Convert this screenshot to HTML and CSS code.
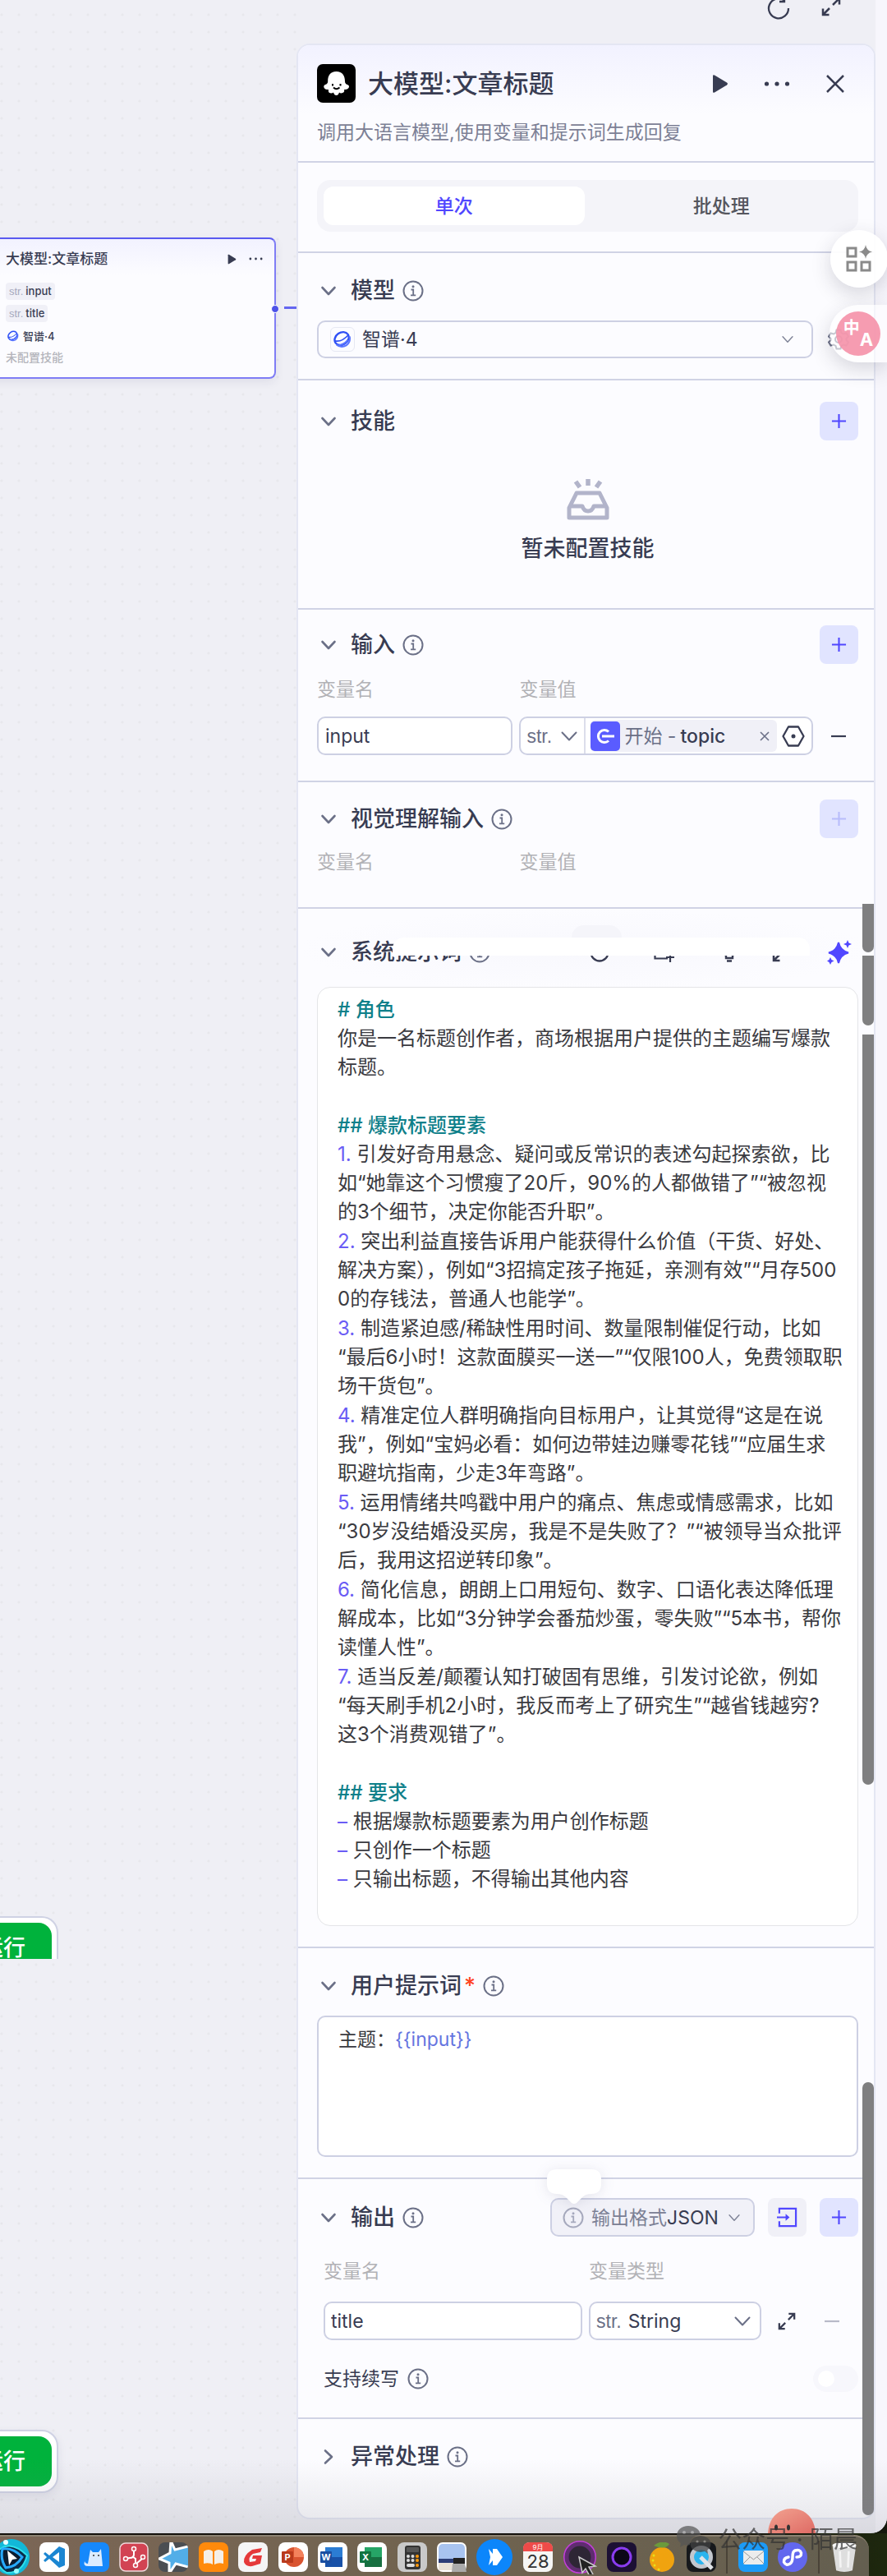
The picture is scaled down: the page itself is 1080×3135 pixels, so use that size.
FILE: index.html
```html
<!DOCTYPE html>
<html lang="zh-CN">
<head>
  <meta charset="UTF-8">
  <meta name="viewport" content="width=device-width, initial-scale=1.0">
  <title>大模型:文章标题</title>
  <link rel="stylesheet" href="styles.css">
</head>
<body>

  <!-- 共用图标 -->
  <svg class="defs" aria-hidden="true">
    <symbol id="i-info" viewBox="0 0 26 26"><circle cx="13" cy="13" r="11.5" fill="none" stroke="currentColor" stroke-width="2"/><path d="M10.5 11.5H13.2V18M10 18.3H16.2" fill="none" stroke="currentColor" stroke-width="1.8"/><circle cx="13" cy="7.8" r="1.5" fill="currentColor"/></symbol>
    <symbol id="i-down" viewBox="0 0 20 20"><path d="M2.5 6L10 14L17.5 6" fill="none" stroke="currentColor" stroke-width="2.6" stroke-linecap="round" stroke-linejoin="round"/></symbol>
    <symbol id="i-thin" viewBox="0 0 20 20"><path d="M1.5 5.5L10 14.5L18.5 5.5" fill="none" stroke="currentColor" stroke-width="2" stroke-linecap="round" stroke-linejoin="round"/></symbol>
    <symbol id="i-plus" viewBox="0 0 20 20"><path d="M1 10H19M10 1V19" fill="none" stroke="currentColor" stroke-width="2.2"/></symbol>
    <symbol id="i-minus" viewBox="0 0 20 20"><path d="M1 10H19" fill="none" stroke="currentColor" stroke-width="2.2"/></symbol>
    <symbol id="i-play" viewBox="0 0 20 24"><path d="M1 2.5Q1 .5 3 1.6L18 10.6Q20 12 18 13.4L3 22.4Q1 23.5 1 21.5Z" fill="currentColor"/></symbol>
    <symbol id="i-dots" viewBox="0 0 32 10"><circle cx="3.5" cy="5" r="2.6" fill="currentColor"/><circle cx="16" cy="5" r="2.6" fill="currentColor"/><circle cx="28.500" cy="5" r="2.6" fill="currentColor"/></symbol>
    <symbol id="i-expand" viewBox="0 0 24 24"><path d="M14 10L21.500 2.500M14.500 2H22V9.500M10 14L2.500 21.500M2 14.500V22H9.500" fill="none" stroke="currentColor" stroke-width="2.500"/></symbol>
    <symbol id="i-zhipu" viewBox="0 0 24 24"><ellipse cx="11" cy="11" rx="10" ry="8" transform="rotate(-35 11 11)" fill="none" stroke="#2f50f5" stroke-width="2.600"/><path d="M2 14Q11 16 20 6" fill="none" stroke="#2f50f5" stroke-width="1.800"/><path d="M4 19Q10 24 17 20Q23 16 21.500 8M7 20Q14 19 19 13" fill="none" stroke="#5a76ff" stroke-width="2.200"/></symbol>
  </svg>

  <main class="workspace">

    <!-- 左侧画布 -->
    <div class="canvas">
      <article class="node">
        <header class="node-head">
          <h3>大模型:文章标题</h3>
          <svg class="node-play"><use href="#i-play"/></svg>
          <svg class="node-dots"><use href="#i-dots"/></svg>
        </header>
        <span class="chip"><span>str.</span>input</span>
        <span class="chip"><span>str.</span>title</span>
        <p class="node-model"><svg><use href="#i-zhipu"/></svg>智谱·4</p>
        <p class="node-empty">未配置技能</p>
        <i class="port"></i>
      </article>
      <i class="edge"></i>
      <div class="run run-cut"><button type="button">试运行</button></div>
      <div class="run run-full"><button type="button">试运行</button></div>
    </div>

    <div class="side">
      <div class="topbar">
        <button class="icon-btn" type="button" aria-label="刷新"><svg width="28" height="28" viewBox="0 0 28 28"><path d="M21 4.500A12 12 0 1 0 26 14M21 0V6H15" fill="none" stroke="currentColor" stroke-width="2.300"/></svg></button>
        <button class="icon-btn" type="button" aria-label="全屏"><svg width="24" height="24"><use href="#i-expand"/></svg></button>
      </div>

      <section class="panel">
        <header class="panel-head">
          <div class="title-row">
            <svg class="logo" viewBox="0 0 47 47"><rect width="47" height="47" rx="7" fill="#000"/><path d="M23.500 9C16 9 13 14 13.200 21Q13.200 24 10 25Q7 26.500 9 29.500Q11 31.500 14 31Q13 35 17 35.500Q19 35.500 20 34.500Q21 38 23.500 38Q26 38 27 34.500Q29 36 31 35Q34 34 33 31Q37 31.500 38.500 29Q40 26 37 25Q34 24 34 21C34 14 31 9 23.500 9Z" fill="#fff"/><path d="M19 24V26.500M28.500 24V26.500" stroke="#000" stroke-width="2"/><path d="M20 28.500Q23.500 32 27.500 28.500" fill="none" stroke="#000" stroke-width="1.800"/></svg>
            <h1>大模型:文章标题</h1>
            <div class="title-actions">
              <button class="icon-btn" type="button" aria-label="运行"><svg width="20" height="24"><use href="#i-play"/></svg></button>
              <button class="icon-btn" type="button" aria-label="更多"><svg width="32" height="10"><use href="#i-dots"/></svg></button>
              <button class="icon-btn" type="button" aria-label="关闭"><svg width="24" height="24" viewBox="0 0 24 24"><path d="M2 2L22 22M22 2L2 22" stroke="currentColor" stroke-width="2.500"/></svg></button>
            </div>
          </div>
          <p class="subtitle">调用大语言模型,使用变量和提示词生成回复</p>
        </header>

        <div class="section tabs-section">
          <div class="tabs" role="tablist">
            <button class="active" type="button" role="tab">单次</button>
            <button type="button" role="tab">批处理</button>
          </div>
        </div>

        <div class="section model">
          <div class="head">
            <svg class="arrow"><use href="#i-down"/></svg>
            <h2>模型</h2>
            <svg class="info"><use href="#i-info"/></svg>
          </div>
          <div class="model-row">
            <label class="field">
              <span class="zhipu"><svg><use href="#i-zhipu"/></svg></span>
              <select aria-label="模型"><option>智谱·4</option></select>
              <svg class="caret-s"><use href="#i-thin"/></svg>
            </label>
            <button class="icon-btn" type="button" aria-label="模型设置"><svg class="gear" width="26" height="26" viewBox="0 0 26 26" fill="none" stroke="currentColor" stroke-width="2"><path d="M10.500 1.500H15.500L16.500 5L19 6.500L22.500 5.500L25 9.500L22.500 12V14L25 16.500L22.500 20.500L19 19.500L16.500 21L15.500 24.500H10.500L9.500 21L7 19.500L3.500 20.500L1 16.500L3.500 14V12L1 9.500L3.500 5.500L7 6.500L9.500 5Z"/><circle cx="13" cy="13" r="4"/></svg></button>
          </div>
        </div>

        <div class="section skills">
          <div class="head">
            <svg class="arrow"><use href="#i-down"/></svg>
            <h2>技能</h2>
            <button class="add" type="button" aria-label="添加技能"><svg><use href="#i-plus"/></svg></button>
          </div>
          <div class="empty">
            <svg width="54" height="50" viewBox="0 0 54 50" fill="none" stroke="#b2b4ca" stroke-width="5" stroke-linejoin="round"><path d="M13 17H41L50 35V47H4V35ZM4 33H20Q22 39 27 39Q32 39 34 33H50"/><path d="M27 0V8M12 3L17 10M42 3L37 10" stroke-width="5.500"/></svg>
            <p>暂未配置技能</p>
          </div>
        </div>

        <div class="section inputs">
          <div class="head">
            <svg class="arrow"><use href="#i-down"/></svg>
            <h2>输入</h2>
            <svg class="info"><use href="#i-info"/></svg>
            <button class="add" type="button" aria-label="添加输入"><svg><use href="#i-plus"/></svg></button>
          </div>
          <div class="input-grid labels"><span>变量名</span><span>变量值</span></div>
          <div class="input-grid">
            <input class="field" type="text" value="input" aria-label="变量名">
            <div class="field value">
              <label class="type">
                <select class="str" aria-label="类型"><option>str.</option></select>
                <svg class="caret"><use href="#i-thin"/></svg>
              </label>
              <span class="ref">
                <svg width="36" height="36" viewBox="0 0 36 36"><rect width="36" height="36" rx="5" fill="#5a5cff"/><path d="M22 12.500A7.500 7.500 0 1 0 22 23.500M14 18H29" fill="none" stroke="#fff" stroke-width="3"/></svg>
                开始 - <b>topic</b>
                <button class="icon-btn" type="button" aria-label="清除"><svg width="12" height="12" viewBox="0 0 12 12"><path d="M1 1L11 11M11 1L1 11" stroke="#6b7087" stroke-width="1.600"/></svg></button>
              </span>
              <button class="icon-btn" type="button" aria-label="选择变量"><svg width="28" height="28" viewBox="0 0 28 28"><path d="M8 2.500H20L26.500 14L20 25.500H8L1.500 14Z" fill="none" stroke="currentColor" stroke-width="2.300" stroke-linejoin="round"/><circle cx="14" cy="14" r="2.500" fill="currentColor"/></svg></button>
            </div>
            <button class="icon-btn cell" type="button" aria-label="删除"><svg width="20" height="20"><use href="#i-minus"/></svg></button>
          </div>
        </div>

        <div class="section vision">
          <div class="head">
            <svg class="arrow"><use href="#i-down"/></svg>
            <h2>视觉理解输入</h2>
            <svg class="info"><use href="#i-info"/></svg>
            <button class="add" type="button" disabled aria-label="添加视觉输入"><svg><use href="#i-plus"/></svg></button>
          </div>
          <div class="input-grid labels"><span>变量名</span><span>变量值</span></div>
        </div>

        <div class="section system">
          <div class="head">
            <svg class="arrow"><use href="#i-down"/></svg>
            <h2>系统提示词</h2>
            <svg class="info"><use href="#i-info"/></svg>
            <div class="tools">
              <button class="icon-btn" type="button" aria-label="历史"><svg width="24" height="24" viewBox="0 0 24 24"><circle cx="12" cy="12" r="10.500" fill="none" stroke="currentColor" stroke-width="2.300"/></svg></button>
              <button class="icon-btn" type="button" aria-label="插入"><svg width="26" height="24" viewBox="0 0 26 24" fill="none" stroke="currentColor" stroke-width="2.200"><path d="M1.500 3V19.500H17M20 14V24M15 18H25"/></svg></button>
              <button class="icon-btn" type="button" aria-label="建议"><svg width="24" height="24" viewBox="0 0 24 24" fill="none" stroke="currentColor" stroke-width="2.400"><path d="M8 16Q4 13 4 9A8 8 0 0 1 20 9Q20 13 16 16V19H8ZM9 22.500H15"/></svg></button>
              <button class="icon-btn expand" type="button" aria-label="展开"><svg width="24" height="24"><use href="#i-expand"/></svg></button>
            </div>
            <button class="icon-btn cell magic" type="button" aria-label="优化"><svg width="30" height="30" viewBox="0 0 30 30" fill="currentColor"><path d="M14 3Q16 13 26 15.500Q16 18 14 28Q12 18 2 15.500Q12 13 14 3Z" stroke="currentColor" stroke-width="2"/><path d="M25 0L26.500 3.500L30 5L26.500 6.500L25 10L23.500 6.500L20 5L23.500 3.500ZM4 21L5.500 24L8.500 25.500L5.500 27L4 30L2.500 27L0 25.500L2.500 24Z"/></svg></button>
            <div class="popover"></div>
          </div>
          <div class="prompt system-prompt" contenteditable="true" role="textbox" aria-multiline="true" aria-label="系统提示词">
            <h4># 角色</h4>
            <p>你是一名标题创作者，商场根据用户提供的主题编写爆款<br>标题。</p>
            <h4 class="gap">## 爆款标题要素</h4>
            <p><em>1.</em> 引发好奇用悬念、疑问或反常识的表述勾起探索欲，比<br>如“她靠这个习惯瘦了20斤，90%的人都做错了”“被忽视<br>的3个细节，决定你能否升职”。</p>
            <p><em>2.</em> 突出利益直接告诉用户能获得什么价值（干货、好处、<br>解决方案），例如“3招搞定孩子拖延，亲测有效”“月存500<br>0的存钱法，普通人也能学”。</p>
            <p><em>3.</em> 制造紧迫感/稀缺性用时间、数量限制催促行动，比如<br>“最后6小时！这款面膜买一送一”“仅限100人，免费领取职<br>场干货包”。</p>
            <p><em>4.</em> 精准定位人群明确指向目标用户，让其觉得“这是在说<br>我”，例如“宝妈必看：如何边带娃边赚零花钱”“应届生求<br>职避坑指南，少走3年弯路”。</p>
            <p><em>5.</em> 运用情绪共鸣戳中用户的痛点、焦虑或情感需求，比如<br>“30岁没结婚没买房，我是不是失败了？”“被领导当众批评<br>后，我用这招逆转印象”。</p>
            <p><em>6.</em> 简化信息，朗朗上口用短句、数字、口语化表达降低理<br>解成本，比如“3分钟学会番茄炒蛋，零失败”“5本书，帮你<br>读懂人性”。</p>
            <p><em>7.</em> 适当反差/颠覆认知打破固有思维，引发讨论欲，例如<br>“每天刷手机2小时，我反而考上了研究生”“越省钱越穷?<br>这3个消费观错了”。</p>
            <h4 class="gap">## 要求</h4>
            <p><em>–</em> 根据爆款标题要素为用户创作标题<br><em>–</em> 只创作一个标题<br><em>–</em> 只输出标题，不得输出其他内容</p>
          </div>
        </div>

        <div class="section user">
          <div class="head">
            <svg class="arrow"><use href="#i-down"/></svg>
            <h2>用户提示词<span class="must">*</span></h2>
            <svg class="info"><use href="#i-info"/></svg>
          </div>
          <div class="prompt user-prompt" contenteditable="true" role="textbox" aria-multiline="true" aria-label="用户提示词"><p>主题：<span class="var">{{input}}</span></p></div>
        </div>

        <div class="section output">
          <div class="head">
            <svg class="arrow"><use href="#i-down"/></svg>
            <h2>输出</h2>
            <svg class="info"><use href="#i-info"/></svg>
            <label class="field format">
              <svg class="info"><use href="#i-info"/></svg>
              <span>输出格式</span>
              <select aria-label="输出格式"><option>JSON</option></select>
              <svg class="caret-s"><use href="#i-thin"/></svg>
              <svg class="bubble" viewBox="0 0 66 42"><path d="M12 0H54Q66 0 66 12V18Q66 30 54 30Q47 30 43 34L36 41Q33 43 30 41L23 34Q19 30 12 30Q0 30 0 18V12Q0 0 12 0Z" fill="#fff"/></svg>
            </label>
            <button class="add import" type="button" aria-label="导入"><svg viewBox="0 0 26 26" fill="none" stroke="currentColor" stroke-width="2.300"><path d="M3 8V2H24V24H3V18M0 13H14"/><path d="M11 8.500L16 13L11 17.500Z" fill="currentColor" stroke="none"/></svg></button>
            <button class="add" type="button" aria-label="添加输出"><svg><use href="#i-plus"/></svg></button>
          </div>
          <div class="output-body">
            <div class="output-grid labels"><span>变量名</span><span>变量类型</span></div>
            <div class="output-grid">
              <input class="field" type="text" value="title" aria-label="变量名">
              <label class="field">
                <span class="str">str.</span>
                <select aria-label="变量类型"><option>String</option></select>
                <svg class="caret"><use href="#i-thin"/></svg>
              </label>
              <button class="icon-btn" type="button" aria-label="展开"><svg width="22" height="22"><use href="#i-expand"/></svg></button>
              <button class="icon-btn muted" type="button" aria-label="删除"><svg width="20" height="20"><use href="#i-minus"/></svg></button>
            </div>
            <div class="switch-row">
              <label for="continue">支持续写</label>
              <svg class="info"><use href="#i-info"/></svg>
              <input id="continue" class="switch" type="checkbox" disabled>
            </div>
          </div>
        </div>

        <div class="section error">
          <div class="head">
            <svg class="arrow right"><use href="#i-down"/></svg>
            <h2>异常处理</h2>
            <svg class="info"><use href="#i-info"/></svg>
          </div>
        </div>

        <i class="thumb thumb-a"></i>
        <i class="thumb thumb-b"></i>
        <i class="thumb thumb-c"></i>
        <i class="thumb thumb-d"></i>
      </section>
    </div>

    <!-- 浮动工具 -->
    <button class="float float-apps" type="button" aria-label="应用"><svg width="34" height="34" viewBox="0 0 34 34" fill="none" stroke="#8a8a8a" stroke-width="3"><path d="M3 4H13V14H3ZM3 21H13V31H3ZM20 21H30V31H20Z"/><path d="M25 0Q26 7 33 8.500Q26 10 25 17Q24 10 17 8.500Q24 7 25 0Z" fill="#8a8a8a" stroke="none"/></svg></button>
    <button class="float float-lang" type="button" aria-label="翻译"><span><b>中</b><b>A</b></span></button>

    <div class="fade"></div>
    <svg class="blob" viewBox="0 0 58 30"><defs><linearGradient id="coral" x2="1" y2="1"><stop stop-color="#f3a391"/><stop offset="1" stop-color="#de6a64"/></linearGradient></defs><path d="M0 30C1 12 12 0 29 0S57 12 58 30Z" fill="url(#coral)"/><ellipse cx="10" cy="23" rx="2" ry="3.500" fill="#333"/><ellipse cx="25" cy="23" rx="2" ry="3.500" fill="#333"/></svg>
  </main>

  <footer class="dock-wrap">
    <nav class="dock">
      <svg class="app app-music" viewBox="0 0 44 44"><circle cx="22" cy="22" r="22" fill="#12b8d8"/><path d="M2 18Q18 -2 41 20Q35 42 16 41Q4 34 2 18Z" fill="#0a2c48" stroke="#2fe0ea" stroke-width="2"/><path d="M11 12Q24 10 35 22Q28 34 15 35Q8 24 11 12Z" fill="#0c1c30" stroke="#26a9ff" stroke-width="3"/><path d="M17 14L29 24L23 25L19 32Z" fill="#fff"/><circle cx="15" cy="4" r="3" fill="#e8ffff"/><circle cx="28" cy="39" r="3" fill="#9ff"/></svg>
      <svg class="app" viewBox="0 0 36 36"><rect width="36" height="36" rx="8" fill="#fff"/><path d="M24 5L31 8V28L24 31L12 20L7 24L5 22L9 18L5 14L7 12L12 16ZM24 12L16 18L24 24Z" fill="#1b86d2"/></svg>
      <svg class="app" viewBox="0 0 36 36"><rect width="36" height="36" rx="8" fill="#1688fb"/><path d="M13 9L16 12H23L26 8L28 29H10Q4 29 6 23Q7 26 10 26Z" fill="#dcecff"/><circle cx="17" cy="16" r="1" fill="#333"/><circle cx="23" cy="16" r="1" fill="#333"/></svg>
      <svg class="app" viewBox="0 0 36 36"><rect x="1" y="1" width="34" height="34" rx="7" fill="#d24353" stroke="#f0d9dc" stroke-width="1.500"/><path d="M18 8V15Q18 19 13 19L8 20M16 17L20 20V28M21 26L28 20" fill="none" stroke="#fff" stroke-width="2"/><g fill="#d24353" stroke="#fff" stroke-width="1.500"><circle cx="18" cy="8" r="2.500"/><circle cx="8" cy="20" r="2.500"/><circle cx="20" cy="28" r="2.500"/><circle cx="29" cy="18" r="2.500"/></g></svg>
      <svg class="app" viewBox="0 0 36 36"><defs><clipPath id="tile"><rect width="36" height="36" rx="8"/></clipPath></defs><g clip-path="url(#tile)"><rect width="36" height="36" fill="#4b4e52"/><path d="M15 -2L20 9L40 4V31L21 26L13 38L13 25L1 20L14 13Z" fill="#52aee8" stroke="#fff" stroke-width="3"/></g></svg>
      <svg class="app" viewBox="0 0 36 36"><rect width="36" height="36" rx="8" fill="#ff8a0c"/><path d="M6 11Q12 7 17 11V27Q12 24 6 26ZM19 11Q24 7 30 11V26Q24 24 19 27Z" fill="#f5efe8"/></svg>
      <svg class="app" viewBox="0 0 36 36"><rect width="36" height="36" rx="8" fill="#f5f5f6"/><path d="M29 7L17 9Q6 16 7 24Q9 30 17 29L27 26L29 16H18L17 20H22L21 23L14 24Q12 18 18 14L27 12Z" fill="#e5393a"/></svg>
      <svg class="app" viewBox="0 0 36 36"><rect width="36" height="36" rx="8" fill="#fff"/><circle cx="19" cy="18" r="12" fill="#d95430"/><path d="M19 6A12 12 0 0 1 31 18H19Z" fill="#f4825c"/><rect x="4" y="11" width="14" height="14" rx="1" fill="#b93a1c"/><text x="11" y="22" class="app-letter">P</text></svg>
      <svg class="app" viewBox="0 0 36 36"><rect width="36" height="36" rx="8" fill="#fff"/><rect x="9" y="6" width="21" height="24" fill="#2b7cd3"/><rect x="9" y="18" width="21" height="12" fill="#1851a8"/><rect x="3" y="11" width="14" height="14" rx="1" fill="#1a4ea0"/><text x="10" y="22" class="app-letter">W</text></svg>
      <svg class="app" viewBox="0 0 36 36"><rect width="36" height="36" rx="8" fill="#fff"/><rect x="9" y="6" width="21" height="24" fill="#26a566"/><rect x="9" y="18" width="21" height="12" fill="#176f40"/><rect x="3" y="11" width="14" height="14" rx="1" fill="#127440"/><text x="10" y="22" class="app-letter">X</text></svg>
      <svg class="app" viewBox="0 0 36 36"><rect width="36" height="36" rx="8" fill="#c9c9c9"/><rect x="9" y="4" width="19" height="29" rx="3" fill="#333"/><rect x="11" y="6" width="15" height="6" rx="1" fill="#555"/><g fill="#ddd"><circle cx="13" cy="17" r="2"/><circle cx="18.500" cy="17" r="2"/><circle cx="13" cy="22" r="2"/><circle cx="18.500" cy="22" r="2"/><rect x="11" y="26" width="10" height="4" rx="2"/></g><g fill="#ff9a0c"><circle cx="24" cy="17" r="2"/><circle cx="24" cy="22" r="2"/><circle cx="24" cy="28" r="2"/></g></svg>
      <svg class="app" viewBox="0 0 36 36"><rect x="1" y="1" width="34" height="34" rx="6" fill="#a9c4f0" stroke="#fff" stroke-width="2"/><rect x="2" y="20" width="32" height="5" fill="#2d3e78"/><rect x="2" y="25" width="32" height="9" fill="#e9e2d8"/><path d="M20 20H34V26H20ZM19 26H34L36 36H18Z" fill="#aaa"/><path d="M20 19H34V26H20Z" fill="#222"/></svg>
      <svg class="app app-big" viewBox="0 0 44 44"><circle cx="22" cy="22" r="22" fill="#0c86fb"/><path d="M15 12L20 18V12H25L32 22L25 32H20V26L15 32L17 22Z" fill="#fff"/></svg>
      <svg class="app" viewBox="0 0 36 36"><rect width="36" height="36" rx="8" fill="#f6f6f4"/><path d="M0 11V8Q0 0 8 0H28Q36 0 36 8V11Z" fill="#ee4b49"/><text x="18" y="9" class="cal-month">9月</text><text x="18" y="31" class="cal-day">28</text></svg>
      <svg class="app app-mid" viewBox="0 0 42 42"><circle cx="21" cy="21" r="19" fill="#2e2635" stroke="#c23fd9" stroke-width="2"/><circle cx="21" cy="21" r="16" fill="none" stroke="#5f2c70" stroke-width="5"/><path d="M20 21L40 32L32 33L37 42L33 44L28 35L24 40Z" fill="#222" stroke="#ccc" stroke-width="1.500"/></svg>
      <svg class="app" viewBox="0 0 36 36"><rect width="36" height="36" rx="8" fill="#1c1034"/><circle cx="18" cy="18" r="11" fill="#0c0718" stroke="#8a3cf0" stroke-width="3"/></svg>
      <svg class="app" viewBox="0 0 36 36"><circle cx="18" cy="21" r="15" fill="#f0a30f"/><path d="M8 4Q18 -4 27 2Q22 10 8 4Z" fill="#6b9a3c"/><g fill="#e8e01c"><circle cx="8" cy="16" r="1.500"/><circle cx="7" cy="22" r="1.500"/><circle cx="9" cy="28" r="1.500"/><circle cx="14" cy="33" r="1.500"/></g></svg>
      <svg class="app" viewBox="0 0 36 36"><rect width="36" height="36" rx="8" fill="#17191c"/><circle cx="18" cy="18" r="11.500" fill="#2ab4ef" stroke="#c2c7ce" stroke-width="5"/><path d="M17 18L31 32" stroke="#dfe3e8" stroke-width="5"/></svg>
      <i class="sep"></i>
      <svg class="app" viewBox="0 0 36 36"><rect width="36" height="36" rx="8" fill="#1c9bf8"/><rect x="6" y="10" width="25" height="17" rx="2" fill="#ececec"/><path d="M6 11L18.500 21L31 11M6 26L14 18M31 26L23 18" fill="none" stroke="#999"/></svg>
      <svg class="app" viewBox="0 0 36 36"><circle cx="18" cy="18" r="18" fill="#6267ee"/><path d="M13 18Q7 19 7.500 24Q10 29 15 26Q18 24 18 18Q18 11 21 10Q27 8 28.500 13Q29 18 23 18" fill="none" stroke="#fff" stroke-width="3.500" stroke-linecap="round"/></svg>
      <i class="sep"></i>
      <svg class="app" viewBox="0 0 36 40"><path d="M2 4H34L29 38Q18 42 7 38Z" fill="#dedede"/><ellipse cx="18" cy="4" rx="16" ry="4" fill="#f7f7f7"/><path d="M12 12L13 34M24 12L23 34" stroke="#f4f4f4" stroke-width="3"/></svg>
    </nav>
    <div class="watermark">
      <svg width="42" height="34" viewBox="0 0 42 34"><path d="M14 0C6 0 0 5 0 12Q0 18 5 21L4 26L9 23Q13 24 16 23Q16 12 29 11C28 4 22 0 14 0Z" fill="#555"/><ellipse cx="29" cy="22" rx="12.500" ry="10" fill="#444"/><path d="M33 30L38 34L37 28Z" fill="#444"/><g fill="#999"><circle cx="9" cy="8" r="2"/><circle cx="19" cy="8" r="2"/><circle cx="25" cy="19" r="1.600"/><circle cx="34" cy="19" r="1.600"/></g></svg>
      公众号 · 陌晨
    </div>
  </footer>

</body>
</html>
```

FILE: styles.css
```css
* {
  box-sizing: border-box;
}

body {
  margin: 0;
  background-color: #14180c;
  color: #383c52;
  font-family: Inter, "Noto Sans CJK SC", sans-serif;
  font-size: 23px;
  line-height: 30px;
}

h1, h2, h3, h4, p {
  margin: 0;
  font-weight: 500;
}

button, input, select {
  margin: 0;
  padding: 0;
  border: none;
  background: none;
  color: inherit;
  font: inherit;
}

button {
  cursor: pointer;
}

select {
  appearance: none;
  flex: 1;
  min-width: 0;
}

svg {
  display: block;
  flex-shrink: 0;
}

.defs {
  position: absolute;
  width: 0;
  height: 0;
}

/* 工作区 */
.workspace {
  position: relative;
  display: grid;
  grid-template-columns: 361px 1fr;
  background-color: #efeff5;
  border-bottom-right-radius: 20px;
  overflow: hidden;
}

.canvas {
  position: relative;
  background-image: radial-gradient(circle at 2px 2px, #e7e7ec 1px, transparent 2px);
  background-size: 21px 21px;
  background-position: 0 16px;
}

.node {
  position: absolute;
  top: 289px;
  left: -20px;
  width: 356px;
  height: 172px;
  padding: 12px 14px 0 25px;
  display: flex;
  flex-direction: column;
  align-items: flex-start;
  background: linear-gradient(#f2f2ff, #fcfcff 44px);
  border: 2px solid #7f7df5;
  border-top-color: #5a5af0;
  border-radius: 8px;
  box-shadow: 0 4px 12px rgba(40, 40, 90, 0.08);
  font-size: 13px;
  line-height: 20px;
}

.node-head {
  display: flex;
  align-items: center;
  align-self: stretch;
  height: 24px;
  margin-bottom: 17px;
}

.node-head h3 {
  flex: 1;
  font-size: 17px;
}

.node-play {
  width: 11px;
  height: 13px;
  margin-right: 15px;
}

.node-dots {
  width: 17px;
  height: 6px;
}

.chip {
  margin-bottom: 6px;
  padding: 0 4px;
  background-color: #f0f0f7;
  border-radius: 4px;
  font-weight: 500;
}

.chip span {
  margin-right: 3px;
  color: #a6a9bd;
  font-family: "Liberation Sans", sans-serif;
  font-weight: 400;
}

.node-model {
  display: flex;
  align-items: center;
  gap: 5px;
  margin: 1px 0 6px;
  padding-left: 2px;
}

.node-model svg {
  width: 14px;
  height: 14px;
}

.node-empty {
  color: #b4b5bb;
  font-size: 14px;
}

.port {
  position: absolute;
  top: 80px;
  right: -6px;
  width: 10px;
  height: 10px;
  border: 1px solid #fff;
  border-radius: 50%;
  background-color: #4d53e8;
}

.edge {
  position: absolute;
  top: 373px;
  right: 0;
  width: 15px;
  height: 3px;
  background-color: #6466f0;
}

.run {
  position: absolute;
  left: -60px;
  width: 131px;
  height: 77px;
  padding: 6px;
  background-color: #fff;
  border: 2px solid #cfd2e4;
  border-radius: 20px;
  box-shadow: 0 4px 12px rgba(40, 40, 90, 0.08);
}

.run button {
  width: 115px;
  height: 61px;
  padding-right: 32px;
  background-color: #00b23c;
  border-radius: 16px;
  color: #fff;
  font-size: 27px;
  font-weight: 500;
  text-align: right;
}

.run-cut {
  top: 2332px;
  height: 52px;
  padding-bottom: 0;
  border-bottom: none;
  border-radius: 20px 20px 0 0;
  box-shadow: none;
  overflow: hidden;
}

.run-full {
  top: 2957px;
}

/* 右侧 */
.side {
  padding: 0 14px 17px 0;
  background: linear-gradient(#f7f6fc, #f7f6fc) right / 14px 100% no-repeat;
}

.topbar {
  display: flex;
  justify-content: flex-end;
  align-items: flex-start;
  gap: 38px;
  height: 53px;
  padding-right: 42px;
}

.topbar svg {
  margin-top: -4px;
}

.icon-btn {
  display: flex;
  align-items: center;
  justify-content: center;
}

.cell {
  width: 47px;
}

.panel {
  position: relative;
  background-color: #fcfcff;
  border: 2px solid #e4e6f3;
  border-radius: 16px;
}

.panel-head {
  padding: 23px 19px 20px 23px;
  border-bottom: 2px solid #d0d3e5;
  border-radius: 14px 14px 0 0;
  background: linear-gradient(#f2f2ff, #fcfcff 84px);
}

.title-row {
  display: flex;
  align-items: center;
  gap: 15px;
  margin-bottom: 21px;
}

.title-row h1 {
  flex: 1;
  font-size: 31px;
  line-height: 47px;
}

.title-actions {
  display: flex;
  gap: 43px;
  padding-right: 16px;
}

.logo {
  width: 47px;
  height: 47px;
}

.subtitle {
  color: #7c8095;
  font-weight: 400;
}

.section {
  padding: 22px 19px 25px 23px;
  border-bottom: 2px solid #d0d3e5;
}

.section .head {
  position: relative;
  display: flex;
  align-items: center;
  height: 47px;
}

.head h2 {
  margin: 0 9px 0 17px;
  font-size: 27px;
  white-space: nowrap;
}

.arrow {
  width: 20px;
  height: 20px;
  margin-left: 4px;
  color: #6b7087;
}

.arrow.right {
  transform: rotate(-90deg);
}

.info {
  width: 26px;
  height: 26px;
  color: #6b7087;
}

.add {
  display: flex;
  align-items: center;
  justify-content: center;
  width: 47px;
  height: 47px;
  margin-left: auto;
  background-color: #e1e4ff;
  border-radius: 8px;
  color: #5147ff;
}

.add svg {
  width: 19px;
  height: 19px;
}

.add:disabled {
  color: #b8bcfb;
}

.tabs-section {
  padding: 21px 19px 24px 23px;
}

.tabs {
  display: grid;
  grid-template-columns: 1fr 1fr;
  gap: 8px;
  padding: 8px;
  background-color: #f4f4f9;
  border-radius: 16px;
}

.tabs button {
  height: 47px;
  border-radius: 12px;
  color: #55565e;
  font-weight: 500;
}

.tabs .active {
  background-color: #fff;
  color: #5147ff;
}

.field {
  display: flex;
  align-items: center;
  width: 100%;
  min-width: 0;
  height: 47px;
  padding: 0 8px;
  background-color: #fff;
  border: 2px solid #cdd0e3;
  border-radius: 10px;
}

.caret {
  width: 20px;
  height: 20px;
  margin-right: 4px;
  color: #6b7087;
}

.caret-s {
  width: 14px;
  height: 14px;
  margin-right: 14px;
  color: #7c8095;
}

.str {
  color: #6b7087;
  font-family: "Liberation Sans", sans-serif;
}

.model-row {
  display: flex;
  gap: 18px;
  margin-top: 13px;
  padding-right: 11px;
}

.model-row .field {
  height: 46px;
  background-color: #fcfcff;
  padding-left: 14px;
}

.zhipu {
  margin-right: 9px;
  padding: 3px;
  border: 1px solid #e6e8f3;
  border-radius: 6px;
}

.zhipu svg {
  width: 22px;
  height: 22px;
}

.gear {
  color: #6b7087;
}

.skills {
  padding: 26px 19px 55px 23px;
}

.empty {
  display: flex;
  flex-direction: column;
  align-items: center;
  gap: 18px;
  margin-top: 47px;
  font-size: 27px;
  line-height: 34px;
}

.inputs {
  padding: 19px 19px 31px 23px;
}

.input-grid {
  display: grid;
  grid-template-columns: 2fr 3fr 47px;
  gap: 8px;
}

.labels {
  margin: 16px 0 18px;
  color: #b2b2b6;
}

.value {
  padding: 0 8px 0 7px;
  gap: 6px;
}

.type {
  display: flex;
  align-items: center;
  align-self: stretch;
  flex-shrink: 0;
  width: 72px;
  border-right: 2px solid #dcdeeb;
}

.type .caret {
  margin-right: 8px;
}

.ref {
  flex: 1;
  display: flex;
  align-items: center;
  gap: 5px;
  height: 39px;
  padding-right: 9px;
  border-radius: 6px;
  background-color: #f0f0f7;
  color: #6b7087;
  white-space: nowrap;
}

.ref b {
  color: #383c52;
  font-weight: 500;
}

.ref .icon-btn {
  margin-left: auto;
}

.vision {
  padding: 21px 19px 40px 23px;
}

.vision .labels {
  margin: 14px 0 0;
}

.system {
  padding: 29px 19px 25px 23px;
  background: radial-gradient(closest-side at 50% 50px, #f8f8fd, #fcfcff);
}

.tools {
  display: flex;
  gap: 54px;
  margin-left: auto;
  margin-right: 34px;
}

.tools .expand {
  margin-left: -14px;
}

.magic {
  color: #5147ff;
}

/* 盖住工具栏上半部分的气泡 */
.popover {
  position: absolute;
  top: 6px;
  left: 92px;
  right: 59px;
  height: 22px;
  background-color: #fff;
  border-radius: 14px 14px 0 0;
}

.popover::before {
  content: '';
  position: absolute;
  bottom: 100%;
  left: 43%;
  width: 61px;
  height: 15px;
  background-color: #f5f5fa;
  border-radius: 20px 20px 0 0;
}

.prompt {
  margin-top: 19px;
  background-color: #fff;
  border: 1px solid #e4e5e8;
  border-radius: 16px;
  color: #3a3a40;
  line-height: 35px;
  white-space: nowrap;
}

.prompt h4 {
  color: #0f808a;
}

.prompt h4.gap {
  padding-top: 35px;
}

.prompt p {
  margin-bottom: 1px;
  font-weight: 400;
}

.prompt em {
  color: #6a5cf5;
  font-style: normal;
}

.system-prompt {
  padding: 9px 16px 38px 24px;
  font-size: 24px;
}

.must {
  margin-left: 3px;
  color: #ff441e;
}

.user-prompt {
  height: 172px;
  margin-top: 13px;
  padding: 10px 24px;
  border: 2px solid #cdd0e3;
  border-radius: 10px;
}

.var {
  color: #6675e0;
}

.output {
  padding: 23px 19px 31px 23px;
}

.format {
  position: relative;
  width: 249px;
  margin-left: auto;
  padding: 0 2px 0 13px;
  background-color: #f1f1f8;
  color: #383c52;
}

.format .info {
  margin-right: 9px;
  color: #a6a9bd;
}

.format span {
  color: #7c8095;
}

.bubble {
  position: absolute;
  top: -37px;
  left: -6px;
  width: 66px;
  height: 42px;
  filter: drop-shadow(0 2px 8px rgba(60, 60, 100, 0.12));
}

.add.import {
  margin: 0 16px;
  background-color: #f0f0f7;
}

.import svg {
  width: 25px;
  height: 25px;
}

.output .head .add:last-child {
  margin-left: 0;
}

.output-body {
  padding-left: 8px;
}

.output-body .labels {
  margin: 27px 0 22px;
}

.output-grid {
  display: grid;
  grid-template-columns: 3fr 2fr 46px 48px;
  column-gap: 8px;
  padding-right: 8px;
}

.output-grid .field {
  padding: 0 7px;
}

.output-grid .str {
  margin-right: 8px;
}

.muted {
  color: #b8bac8;
}

.switch-row {
  display: flex;
  align-items: center;
  height: 32px;
  margin-top: 31px;
}

.switch-row .info {
  margin-left: 10px;
}

.switch {
  appearance: none;
  width: 55px;
  height: 32px;
  margin-left: auto;
  padding: 6px;
  background-color: #f7f7fc;
  border-radius: 16px;
}

.switch::before {
  content: '';
  display: block;
  width: 20px;
  height: 20px;
  background-color: #fff;
  border-radius: 50%;
}

.error {
  padding-bottom: 51px;
  border-bottom: none;
}

/* 滚动条 */
.thumb {
  position: absolute;
  right: 0;
  width: 14px;
  background-color: #7f7f80;
  border-radius: 0 0 7px 7px;
}

.thumb-a {
  top: 1045px;
  height: 59px;
}

.thumb-b {
  top: 1108px;
  height: 85px;
}

.thumb-c {
  top: 1204px;
  height: 913px;
}

.thumb-d {
  top: 2479px;
  height: 527px;
  border-radius: 7px;
}

/* 浮动按钮 */
.float {
  position: absolute;
  right: 0;
  display: flex;
  align-items: center;
  justify-content: center;
  height: 70px;
  background-color: rgba(255, 255, 255, 0.92);
  box-shadow: 0 8px 24px rgba(40, 40, 60, 0.18);
}

.float-apps {
  top: 280px;
  right: -1px;
  width: 70px;
  border-radius: 50%;
}

.float-lang {
  top: 371px;
  width: 70px;
  border-radius: 35px 0 0 35px;
  background-color: rgba(255, 255, 255, 0.6);
}

.float-lang span {
  display: flex;
  justify-content: center;
  width: 54px;
  height: 54px;
  padding: 10px 0;
  background-color: rgba(245, 145, 168, 0.9);
  border-radius: 50%;
  color: #fff;
  font-size: 20px;
  line-height: 20px;
}

.float-lang b:last-child {
  align-self: flex-end;
  font-size: 22px;
}

.fade {
  position: absolute;
  left: 0;
  right: 0;
  bottom: 0;
  height: 90px;
  background: linear-gradient(rgba(120, 120, 130, 0), rgba(120, 120, 130, 0.18));
  pointer-events: none;
}

.blob {
  position: absolute;
  right: 87px;
  bottom: 0;
  width: 58px;
  height: 30px;
}

/* 程序坞 */
.dock-wrap {
  position: relative;
  padding: 2px 22px 0 0;
  background: linear-gradient(90deg, #14110c 80%, #1e280e);
}

.dock {
  display: flex;
  align-items: center;
  justify-content: space-between;
  height: 51px;
  padding: 0 12px 0 0;
  background: linear-gradient(90deg, #7b6656, #70634f 50%, #645f50);
  border-top: 2px solid #8c8272;
  border-top-right-radius: 18px;
  overflow: hidden;
}

.app {
  width: 36px;
  height: 36px;
}

.app-music {
  width: 44px;
  height: 44px;
  margin-left: -8px;
}

.app-big {
  width: 44px;
  height: 44px;
}

.app-mid {
  width: 42px;
  height: 42px;
}

.app-letter {
  fill: #fff;
  font-size: 11px;
  font-weight: 700;
  text-anchor: middle;
}

.cal-month {
  fill: #fff;
  font-size: 8px;
  text-anchor: middle;
}

.cal-day {
  fill: #333;
  font-size: 22px;
  text-anchor: middle;
}

.sep {
  width: 2px;
  height: 40px;
  background-color: #4a4338;
}

.watermark {
  position: absolute;
  right: 36px;
  top: -10px;
  display: flex;
  align-items: center;
  gap: 8px;
  color: #333;
  font-size: 29px;
  line-height: 36px;
  opacity: 0.7;
}
```
